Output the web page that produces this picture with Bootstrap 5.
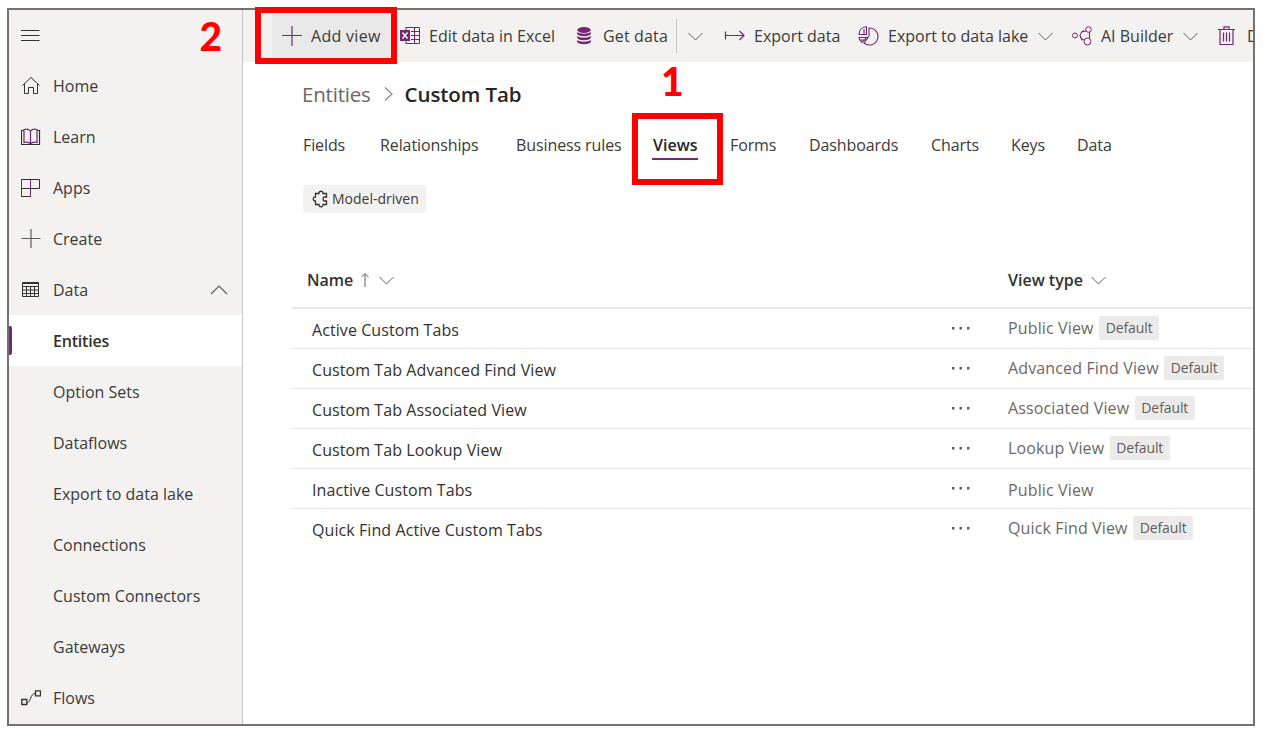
<!DOCTYPE html>
<html lang="en">
<head>
<meta charset="utf-8">
<meta name="viewport" content="width=device-width, initial-scale=1">
<title>Custom Tab - Views</title>
<link rel="stylesheet" href="https://cdn.jsdelivr.net/npm/bootstrap@5.3.0/dist/css/bootstrap.min.css">
<style>
  body { font-family: "Open Sans", "Noto Sans", sans-serif; font-size: 16px; line-height: 20px; color: #3b3a39; background: #fff; overflow: hidden; }
  svg { display: block; flex: none; fill: none; stroke: #323130; }
  .frame { width: 1248px; height: 718px; margin: 8px 0 0 7px; border: 2px solid #767171; }

  .side { width: 234px; background: #f3f2f1; border-right: 1px solid #c8c6c4; }
  .side .nav-link { height: 51px; padding: 0 14px 0 12px; color: #3b3a39; font-size: 16px; white-space: nowrap; }
  .side .nav-link:first-child { height: 50px; }
  .side .nav-link .ico { width: 20px; margin-right: 12px; }
  .side .nav-link.active { background: #fff; color: #323130; font-weight: 600; letter-spacing: -.2px; box-shadow: none; }
  .side .nav-link.active::before { content: ""; position: absolute; left: 0; top: 11px; width: 3px; height: 29px; background: #742774; border-radius: 0 2px 2px 0; }

  .cmdbar { height: 52px; background: #f3f2f1; white-space: nowrap; padding-left: 29px; }
  .cmdbar svg { stroke: #742774; }
  .cmdbar svg.chev { stroke: #605e5c; }
  .cmd-add { width: 121px; background: #e9e9e9; padding-left: 10px; letter-spacing: .3px; }
  .cmd-excel { width: 183px; padding-left: 7px; }
  .cmd-get { width: 148px; letter-spacing: .15px; }
  .cmd-get .split { margin: 0 11px 0 auto; }
  .cmd-get .chev { margin-right: 21px; }
  .cmd-export { width: 134px; }
  .cmd-lake { width: 214px; }
  .cmd-lake .chev { margin-left: 10px; }
  .cmd-ai { width: 146px; }
  .cmd-ai .chev { margin-left: 10px; }
  .split { width: 1px; height: 34px; background: #c8c6c4; }

  .crumbs { height: 62px; padding: 2px 0 0 59px; font-size: 20.5px; }
  .crumbs svg { margin: 0 12px 0 13px; }
  .crumbs a { color: #696765; letter-spacing: -.2px; }
  .crumbs strong { color: #252423; font-size: 20.5px; font-weight: 600; letter-spacing: -.1px; }
  .tabs { height: 42px; padding-left: 60px; white-space: nowrap; display: grid; grid-template-columns: 77px 136px 137px 77px 79px 122px 80px 66px auto; justify-content: start; }
  .tabs .nav-link { padding: 0; color: #3b3a39; position: relative; font-size: 16px; letter-spacing: -.1px; justify-self: start; }
  .tabs .nav-link.active { color: #252423; font-weight: 600; letter-spacing: 0; }
  .tabs .nav-link.active::after { content: ""; position: absolute; left: -1px; right: -1px; top: 23px; height: 2px; background: #742774; }
  .chip { width: 123px; height: 28px; margin: 19px 0 0 60px; padding-left: 9px; gap: 3px; background: #f3f2f1; border-radius: 4px; font-size: 14px; color: #3b3a39; }

  .views { width: 961px; margin: 38px 0 0 49px; table-layout: fixed; font-size: 16px; --bs-table-bg: transparent; }
  .views th { height: 57px; padding: 2px 0 0 15px; border-bottom: 2px solid #e9e8e7; color: #323130; font-weight: 600; vertical-align: middle; }
  .views td { height: 40px; padding: 3px 0 0 20px; border-bottom: 1px solid #e6e5e4; vertical-align: middle; color: #323130; letter-spacing: .08px; }
  .views tr:last-child td { border-bottom: 0; }
  .views th.kind { padding-left: 31px; }
  .views td.kind { padding: 0 0 0 31px; color: #6b6967; letter-spacing: .14px; }
  .views td.plain { padding-top: 3px; }
  .views td.more { padding: 0 0 1px 18px; }
  .views .badge { width: 60px; height: 24px; margin-left: 5.500px; padding: 0; background: #edebe9; color: #605e5c; font-size: 14px; line-height: 24px; font-weight: 400; border-radius: 2px; letter-spacing: -.1px; }
  svg.dots { fill: #605e5c; stroke: none; }

  .callout { position: absolute; border: 6px solid #f00; }
  .callout-add { left: 255px; top: 7px; width: 142px; height: 57px; }
  .callout-views { left: 632px; top: 113px; width: 91px; height: 72px; }
  .step { position: absolute; color: #f00; font: 900 39px/40px Lato, sans-serif; }
  .step-one { left: 661px; top: 61px; }
  .step-two { left: 199.500px; top: 16px; }
</style>
</head>
<body>
<div class="frame d-flex overflow-hidden">
  <nav class="side nav flex-column flex-nowrap flex-shrink-0">
    <a class="nav-link d-flex align-items-center" href="#"><span class="ico"><svg width="20" height="20"><path d="M-1 5.500H18.500M-1 10.500H18.500M-1 15.500H18.500"/></svg></span></a>
    <a class="nav-link d-flex align-items-center" href="#"><span class="ico"><svg width="20" height="20"><path d="M1.500 9.500L10 1.500L18.500 9.500M3.500 8V17.500H7.500V11.500H12.500V17.500H16.500V8"/></svg></span>Home</a>
    <a class="nav-link d-flex align-items-center" href="#"><span class="ico"><svg width="20" height="20" stroke-width="1.200"><path d="M3 3.500H.5V17.500H18.500V3.500H16"/><path d="M9.500 4C8 2 5 2 3 2.500V15.500C5 15 8 15 9.500 17C11 15 14 15 16 15.500V2.500C14 2 11 2 9.500 4V17" stroke="#742774"/></svg></span>Learn</a>
    <a class="nav-link d-flex align-items-center" href="#"><span class="ico"><svg width="20" height="20"><path d="M.5 1.500H18.500V10.500H.5ZM.5 10.500V18.500H9.500V1.500" /><path d="M.5 1.500V18.500M9.500 1.500V18.500" stroke="#742774"/></svg></span>Apps</a>
    <a class="nav-link d-flex align-items-center" href="#"><span class="ico"><svg width="20" height="20"><path d="M.5 9.500H19.500M10 0V19" stroke="#605e5c" stroke-width="1.200"/></svg></span>Create</a>
    <a class="nav-link d-flex align-items-center" href="#"><span class="ico"><svg width="20" height="20"><path d="M2 3.500H18M1.500 2.500H17.500V16.500H1.500ZM1.500 6.500H17.500M1.500 10H17.500M1.500 13.500H17.500M5.500 6V16.500M9.500 6V16.500M13.500 6V16.500"/></svg></span>Data
      <svg class="ms-auto" width="18" height="10"><path d="M1 9L9 1L17 9" stroke="#605e5c" stroke-width="1.200"/></svg></a>
    <a class="nav-link d-flex align-items-center position-relative active" href="#"><span class="ico"></span>Entities</a>
    <a class="nav-link d-flex align-items-center" href="#"><span class="ico"></span>Option Sets</a>
    <a class="nav-link d-flex align-items-center" href="#"><span class="ico"></span>Dataflows</a>
    <a class="nav-link d-flex align-items-center" href="#"><span class="ico"></span>Export to data lake</a>
    <a class="nav-link d-flex align-items-center" href="#"><span class="ico"></span>Connections</a>
    <a class="nav-link d-flex align-items-center" href="#"><span class="ico"></span>Custom Connectors</a>
    <a class="nav-link d-flex align-items-center" href="#"><span class="ico"></span>Gateways</a>
    <a class="nav-link d-flex align-items-center" href="#"><span class="ico"><svg width="20" height="20"><path d="M.8 11.500H5.800V16.500H.8ZM14.500 2.800H19.500V7.800H14.500Z" stroke-width="1.300"/><path d="M6 14.500C10 15 9 5 14.500 5.500"/></svg></span>Flows</a>
  </nav>

  <main class="flex-grow-1 overflow-hidden">
    <div class="cmdbar d-flex align-items-center overflow-hidden">
      <div class="cmd-add d-flex align-items-center h-100 flex-shrink-0"><svg class="me-2" width="21" height="20"><path d="M0 9.500H20M10 0V20" stroke-width="1.200"/></svg>Add view</div>
      <div class="cmd-excel d-flex align-items-center flex-shrink-0"><svg class="me-2" width="21" height="20"><path d="M6 1.500H19.500V17.500H6M11 5.500H19.500M11 9.500H19.500M11 13.500H19.500M14.500 1.500V17.500M6 1V18"/><path d="M0 4H10V15H0Z" fill="#742774" stroke="none"/><path d="M2.500 6.500L7.500 12.500M7.500 6.500L2.500 12.500" stroke="#fff" stroke-width="1.500"/></svg>Edit data in Excel</div>
      <div class="cmd-get d-flex align-items-center flex-shrink-0"><svg width="27" height="20"><g fill="#742774" stroke="none"><ellipse cx="8" cy="4" rx="6.800" ry="2.900"/><path d="M1.200 6C4 8.300 12 8.300 14.800 6V8C13 11 3 11 1.200 8ZM1.200 10C4 12.300 12 12.300 14.800 10V12C13 15 3 15 1.200 12ZM1.200 14C4 16.300 12 16.300 14.800 14V16C13 19 3 19 1.200 16Z"/></g></svg>Get data<span class="split"></span><svg class="chev" width="15" height="9"><path d="M.5 1L7.500 8L14.500 1"/></svg></div>
      <div class="cmd-export d-flex align-items-center flex-shrink-0"><svg width="30" height="20"><path d="M1.500 5.500V13.500M1.500 9.500H20M15.500 5L20 9.500L15.500 14" stroke-width="1.200"/></svg>Export data</div>
      <div class="cmd-lake d-flex align-items-center flex-shrink-0"><svg width="30" height="20"><path d="M11 2A8.500 8.500 0 1 1 6 17L11 10ZM8.500 .8V8.500H1C1 4 4 1 8.500 .8ZM6 3V8M1 11.500H8.500L4 16.500C2 15 1 13.500 1 11.500ZM2 14H6" stroke-width="1.100"/></svg>Export to data lake<svg class="chev" width="15" height="9"><path d="M.5 1L7.500 8L14.500 1"/></svg></div>
      <div class="cmd-ai d-flex align-items-center flex-shrink-0"><svg width="29" height="20"><circle cx="3" cy="9.500" r="2.500"/><circle cx="16.500" cy="3.500" r="2.800"/><circle cx="15.500" cy="15.500" r="3.500"/><path d="M14 5L9.500 6L8 9.500L9.500 13L12.500 14M17.500 6V12M9.500 6L12 4.500M8 9.500L10 14.500"/></svg>AI Builder<svg class="chev" width="15" height="9"><path d="M.5 1L7.500 8L14.500 1"/></svg></div>
      <div class="d-flex align-items-center flex-shrink-0"><svg width="29" height="20"><path d="M0 3.500H17M6 3V.8H11V3M2 3.500V18.500H15V3.500M5.500 6.500V15.500M8.500 6.500V15.500M11.500 6.500V15.500" stroke-width="1.200"/></svg>D</div>
    </div>

    <div class="crumbs d-flex align-items-center"><a class="text-decoration-none" href="#">Entities</a><svg width="9" height="16"><path d="M1 1.500L8 8L1 14.500" stroke="#8a8886" stroke-width="1.200"/></svg><strong>Custom Tab</strong></div>

    <nav class="tabs align-items-center">
      <a class="nav-link" href="#">Fields</a>
      <a class="nav-link" href="#">Relationships</a>
      <a class="nav-link" href="#">Business rules</a>
      <a class="nav-link active" href="#">Views</a>
      <a class="nav-link" href="#">Forms</a>
      <a class="nav-link" href="#">Dashboards</a>
      <a class="nav-link" href="#">Charts</a>
      <a class="nav-link" href="#">Keys</a>
      <a class="nav-link" href="#">Data</a>
    </nav>

    <div class="chip d-flex align-items-center"><svg width="17" height="18"><path d="M3.500 3.500H7C6.500 .5 11.500 .5 11 3.500H14.500V7H12.500C10.500 7 10.500 11 12.500 11H14.500V14.500H11C11.500 17.500 6.500 17.500 7 14.500H3.500V11C.5 11.500 .5 6.500 3.500 7Z" stroke-width="1.300"/></svg>Model-driven</div>

    <table class="views table mb-0">
      <colgroup><col style="width:642px"><col style="width:43px"><col></colgroup>
      <thead><tr>
        <th><div class="d-flex align-items-center">Name<svg class="ms-2" width="9" height="16"><path d="M4 15V2M.5 5L4 1.500L7.500 5" stroke="#605e5c"/></svg><svg class="ms-2" width="20" height="9"><path d="M1.500 1L8.500 8L15.500 1" stroke="#605e5c"/></svg></div></th>
        <th></th>
        <th class="kind"><div class="d-flex align-items-center">View type<svg class="ms-2" width="15" height="9"><path d="M.5 1L7.500 8L14.500 1" stroke="#605e5c"/></svg></div></th>
      </tr></thead>
      <tbody id="rows"></tbody>
    </table>
  </main>
</div>

<div class="callout callout-add"></div>
<div class="callout callout-views"></div>
<div class="step step-one">1</div>
<div class="step step-two">2</div>

<script src="https://cdn.jsdelivr.net/npm/bootstrap@5.3.0/dist/js/bootstrap.bundle.min.js"></script>
<script>
  const views = [
    ["Active Custom Tabs", "Public View", true],
    ["Custom Tab Advanced Find View", "Advanced Find View", true],
    ["Custom Tab Associated View", "Associated View", true],
    ["Custom Tab Lookup View", "Lookup View", true],
    ["Inactive Custom Tabs", "Public View", false],
    ["Quick Find Active Custom Tabs", "Quick Find View", true]
  ];
  document.getElementById("rows").innerHTML = views.map(([name, kind, isDefault]) => `
    <tr><td>${name}</td>
      <td class="more"><svg class="dots" width="20" height="4"><rect x="0" y="1" width="2.500" height="2.500"/><rect x="7.500" y="1" width="2.500" height="2.500"/><rect x="15" y="1" width="2.500" height="2.500"/></svg></td>
      <td class="kind${isDefault ? '' : ' plain'}"><div class="d-flex align-items-center">${kind}${isDefault ? '<span class="badge">Default</span>' : ''}</div></td></tr>`).join("");
</script>
</body>
</html>
